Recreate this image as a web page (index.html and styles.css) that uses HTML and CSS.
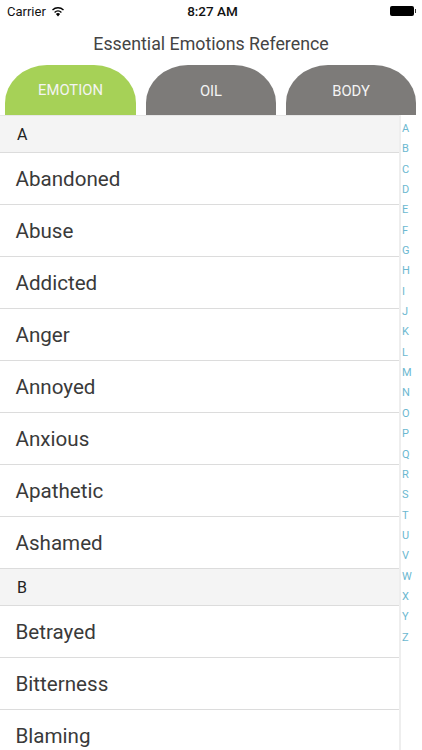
FILE: index.html
```html
<!DOCTYPE html>
<html lang="en">

<head>
    <meta charset="UTF-8">
    <meta name="viewport" content="width=device-width, initial-scale=1.0">
    <title>Essential Emotions Reference</title>
    <link rel="stylesheet" href="styles.css">
</head>

<body>
    <div class="container">
        <div class="status-bar">
            <div class="status-left">
                <span>Carrier</span>
                <svg class="wifi" width="14" height="11" viewBox="0 0 14 11">
                    <path d="M7 10.5 L4.9 8 A3 3 0 0 1 9.1 8 Z" fill="#000" />
                    <path d="M3.6 6.4 A5 5 0 0 1 10.4 6.4" fill="none" stroke="#000" stroke-width="1.4" />
                    <path d="M1.5 4 A8 8 0 0 1 12.5 4" fill="none" stroke="#000" stroke-width="1.4" />
                </svg>
            </div>
            <div class="status-time">8:27 AM</div>
            <div class="status-right">
                <div class="battery"></div>
                <div class="battery-tip"></div>
            </div>
        </div>

        <div class="title">Essential Emotions Reference</div>

        <div class="tabs">
            <div class="tab tab-active">EMOTION</div>
            <div class="tab">OIL</div>
            <div class="tab">BODY</div>
        </div>

        <div class="content-area">
            <div class="list">
                <div class="section">A</div>
                <div class="row">Abandoned</div>
                <div class="row">Abuse</div>
                <div class="row">Addicted</div>
                <div class="row">Anger</div>
                <div class="row">Annoyed</div>
                <div class="row">Anxious</div>
                <div class="row">Apathetic</div>
                <div class="row">Ashamed</div>
                <div class="section">B</div>
                <div class="row">Betrayed</div>
                <div class="row">Bitterness</div>
                <div class="row">Blaming</div>
            </div>
            <div class="index">
                <span>A</span><span>B</span><span>C</span><span>D</span><span>E</span><span>F</span><span>G</span>
                <span>H</span><span>I</span><span>J</span><span>K</span><span>L</span><span>M</span><span>N</span>
                <span>O</span><span>P</span><span>Q</span><span>R</span><span>S</span><span>T</span><span>U</span>
                <span>V</span><span>W</span><span>X</span><span>Y</span><span>Z</span>
            </div>
        </div>
    </div>
</body>

</html>
```

FILE: styles.css
```css
* {
    box-sizing: border-box;
    margin: 0;
    padding: 0;
    font-family: Roboto, "Liberation Sans", sans-serif;
}

html,
body {
    height: 100%;
    overflow: hidden;
    background: #fff;
}

.container {
    height: 750px;
    width: 422px;
    display: flex;
    flex-direction: column;
    overflow: hidden;
}

.status-bar {
    height: 22px;
    display: grid;
    grid-template-columns: 1fr auto 1fr;
    align-items: center;
    padding: 0 6px 0 7px;
    font-size: 13px;
    color: #111;
}

.status-left {
    display: flex;
    align-items: center;
    gap: 5px;
}

.status-time {
    font-weight: 500;
    font-size: 13.5px;
    padding-left: 2px;
}

.status-right {
    display: flex;
    align-items: center;
    justify-content: flex-end;
}

.battery {
    width: 24px;
    height: 10px;
    background: #000;
    border-radius: 2px;
}

.battery-tip {
    width: 1px;
    height: 4px;
    background: #333;
    margin-left: 1px;
}

.title {
    height: 43px;
    line-height: 43px;
    text-align: center;
    font-size: 17.8px;
    color: #444;
}

.tabs {
    height: 50px;
    display: grid;
    grid-template-columns: 131px 130px 130px;
    gap: 10px;
    padding-left: 5px;
}

.tab {
    height: 50px;
    padding-top: 2px;
    background: #7d7b79;
    border-radius: 42px 42px 0 0 / 38px 38px 0 0;
    color: #f4f4f4;
    font-size: 14.8px;
    text-align: center;
    line-height: 48px;
}

.tab-active {
    padding-top: 1px;
    background: #a6d157;
}

.content-area {
    flex: 1;
    display: grid;
    grid-template-columns: 399px 23px;
    min-height: 0;
}

.list {
    overflow: hidden;
    padding-top: 1px;
    background: linear-gradient(#e6e6e6 1px, transparent 1px);
}

.section {
    height: 37px;
    padding-left: 17px;
    line-height: 37px;
    font-size: 16px;
    color: #222;
    background: #f4f4f4;
    border-bottom: 1px solid #dcdcdc;
}

.row {
    height: 52px;
    padding-left: 15.5px;
    line-height: 52px;
    font-size: 20.6px;
    color: #3a3a3a;
    border-bottom: 1px solid #dcdcdc;
}

.index {
    border-left: 2px solid #eeeeee;
    padding: 4px 0 0 1px;
    display: flex;
    flex-direction: column;
}

.index span {
    height: 20.35px;
    line-height: 20px;
    font-size: 11px;
    color: #6cb8d0;
}
```
